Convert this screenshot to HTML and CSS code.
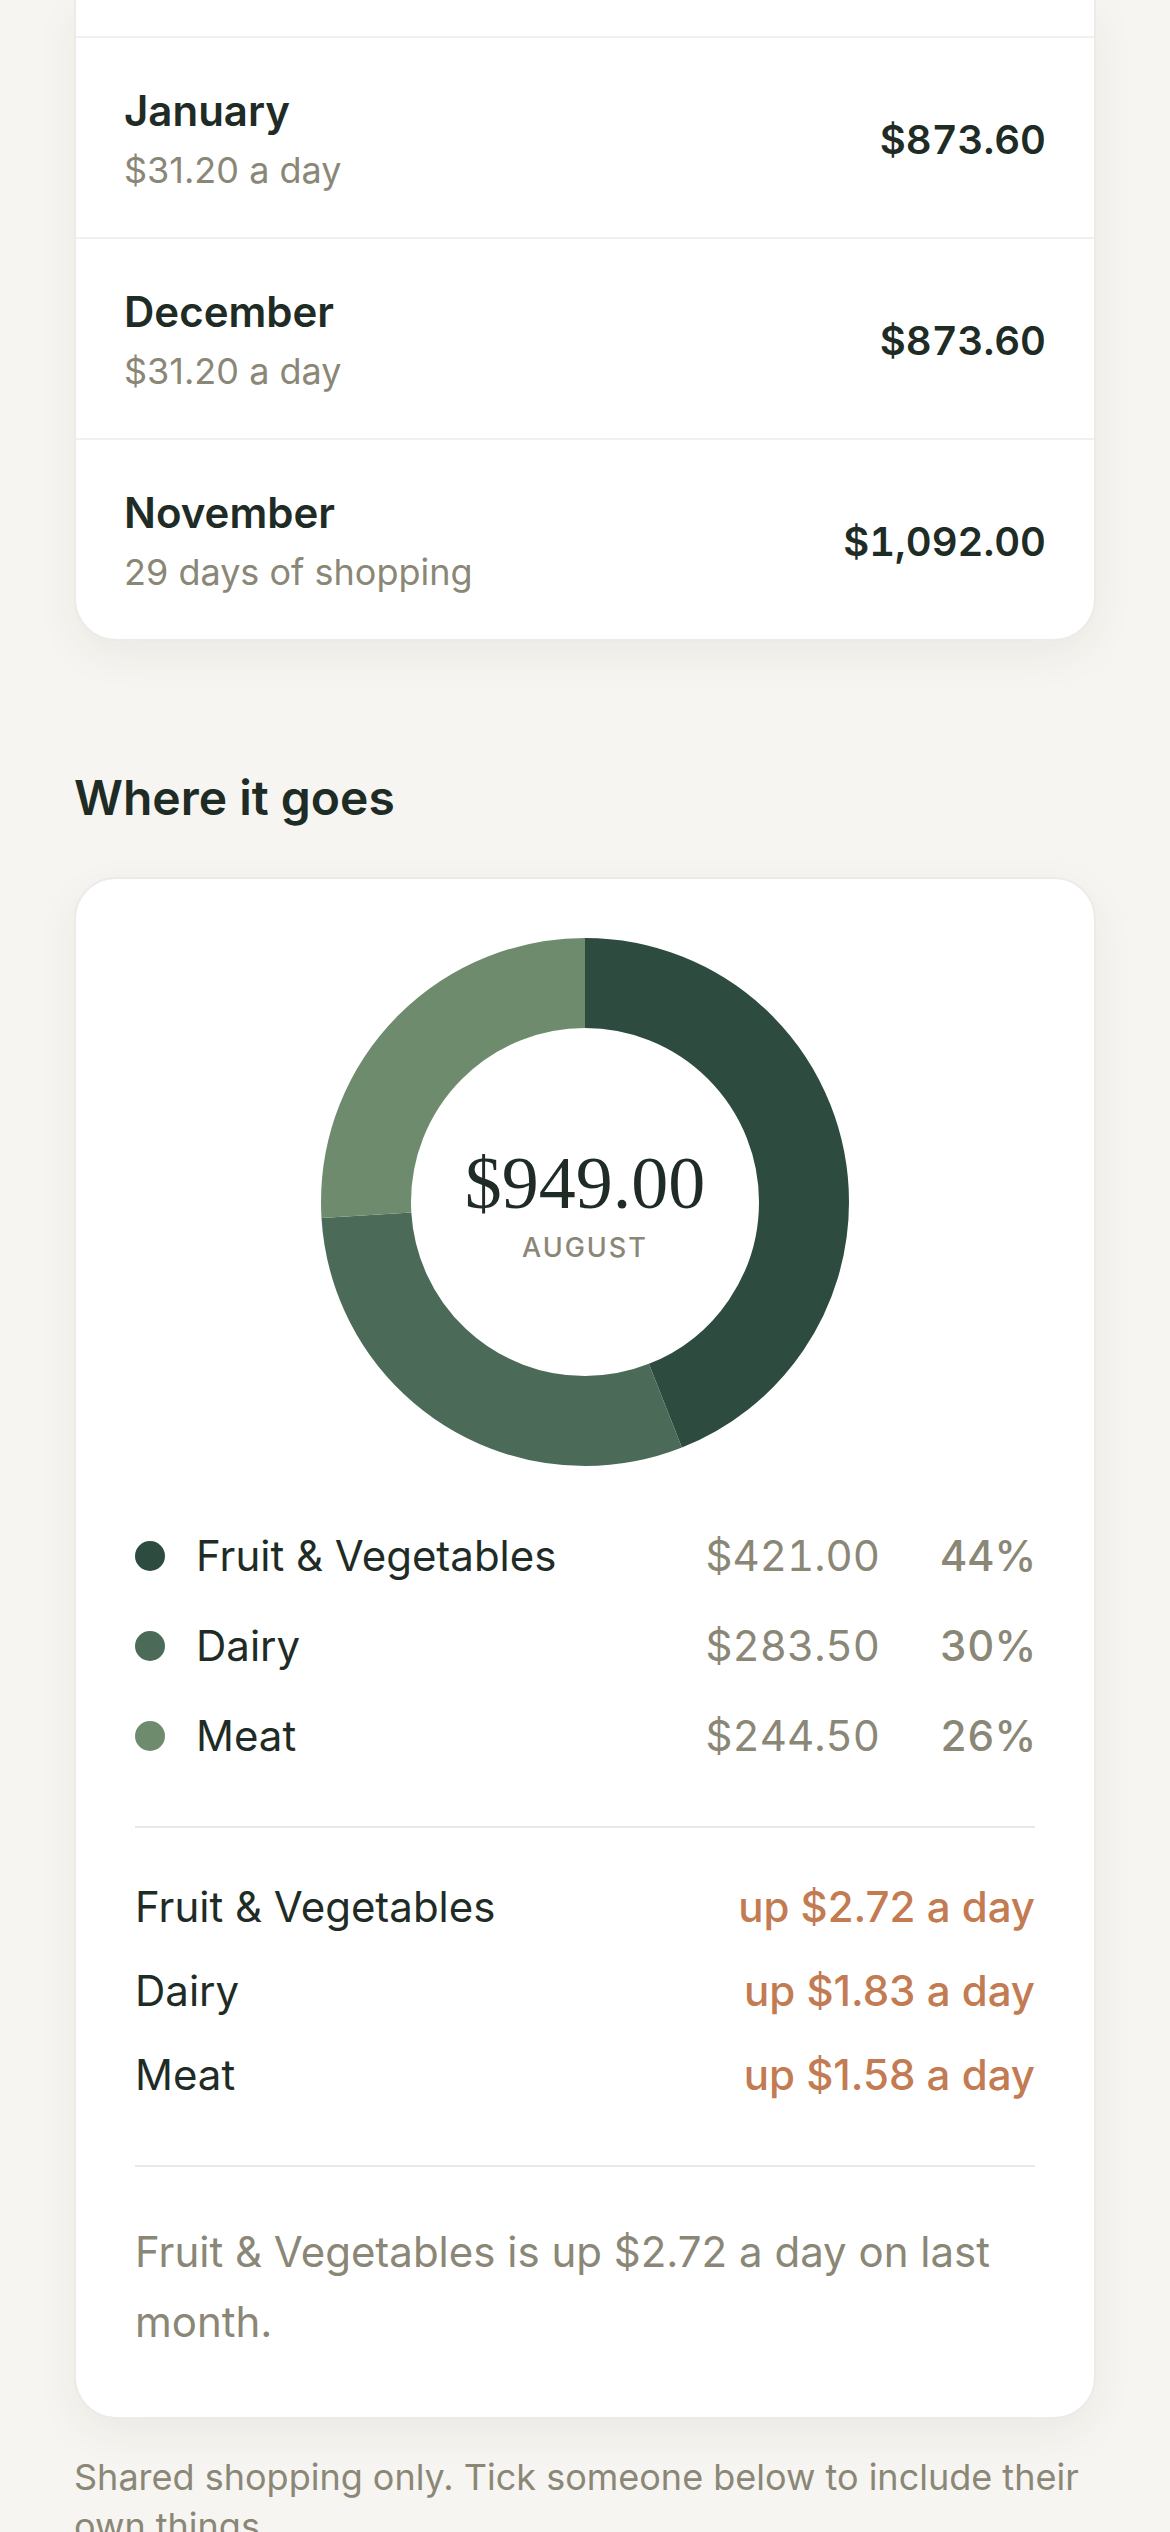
FILE: index.html
```html
<!DOCTYPE html>
<html lang="en">
<head>
<meta charset="utf-8">
<title>Spending</title>
<link rel="stylesheet" href="styles.css">
</head>
<body>
<main class="page">
  <section class="card months">
    <div class="months-top"></div>
    <div class="month-row">
      <div class="month-info">
        <div class="month-name">January</div>
        <div class="month-sub">$31.20 a day</div>
      </div>
      <div class="month-amt">$873.60</div>
    </div>
    <div class="month-row">
      <div class="month-info">
        <div class="month-name">December</div>
        <div class="month-sub">$31.20 a day</div>
      </div>
      <div class="month-amt">$873.60</div>
    </div>
    <div class="month-row">
      <div class="month-info">
        <div class="month-name">November</div>
        <div class="month-sub">29 days of shopping</div>
      </div>
      <div class="month-amt">$1,092.00</div>
    </div>
  </section>

  <h2 class="section-title">Where it goes</h2>

  <section class="card breakdown">
    <div class="donut">
      <svg class="donut-svg" width="528" height="528" viewBox="0 0 528 528" aria-hidden="true">
        <g transform="rotate(-90 264 264)">
          <circle cx="264" cy="264" r="219" fill="none" stroke="#2e4b3f" stroke-width="90" stroke-dasharray="605.44 770.56" stroke-dashoffset="0"></circle>
          <circle cx="264" cy="264" r="219" fill="none" stroke="#4b6b58" stroke-width="90" stroke-dasharray="412.80 963.20" stroke-dashoffset="-605.44"></circle>
          <circle cx="264" cy="264" r="219" fill="none" stroke="#6e8c6d" stroke-width="90" stroke-dasharray="357.76 1018.24" stroke-dashoffset="-1018.24"></circle>
        </g>
      </svg>
      <div class="donut-center">
        <div class="donut-amt">$949.00</div>
        <div class="donut-month">AUGUST</div>
      </div>
    </div>

    <ul class="legend">
      <li class="legend-row">
        <span class="dot dot-1"></span>
        <span class="legend-name">Fruit &amp; Vegetables</span>
        <span class="legend-amt">$421.00</span>
        <span class="legend-pct">44%</span>
      </li>
      <li class="legend-row">
        <span class="dot dot-2"></span>
        <span class="legend-name">Dairy</span>
        <span class="legend-amt">$283.50</span>
        <span class="legend-pct">30%</span>
      </li>
      <li class="legend-row">
        <span class="dot dot-3"></span>
        <span class="legend-name">Meat</span>
        <span class="legend-amt">$244.50</span>
        <span class="legend-pct">26%</span>
      </li>
    </ul>

    <hr class="divider divider-1">

    <ul class="changes">
      <li class="change-row">
        <span class="change-name">Fruit &amp; Vegetables</span>
        <span class="change-val">up $2.72 a day</span>
      </li>
      <li class="change-row">
        <span class="change-name">Dairy</span>
        <span class="change-val">up $1.83 a day</span>
      </li>
      <li class="change-row">
        <span class="change-name">Meat</span>
        <span class="change-val">up $1.58 a day</span>
      </li>
    </ul>

    <hr class="divider divider-2">

    <p class="note">Fruit &amp; Vegetables is up $2.72 a day on last month.</p>
  </section>

  <p class="footnote">Shared shopping only. Tick someone below to include their own things.</p>
</main>
</body>
</html>
```

FILE: styles.css
```css
* {
  box-sizing: border-box;
}

html, body {
  margin: 0;
  padding: 0;
  background: #f6f5f1;
}

body {
  font-family: Inter, "Noto Sans", "Liberation Sans", sans-serif;
  color: #1f2c26;
  overflow: hidden;
}

.page {
  padding: 0 74px;
}

.card {
  background: #ffffff;
  border: 2px solid #ecebe6;
  border-radius: 42px;
  box-shadow: 0 14px 44px rgba(60, 55, 40, 0.06);
}

/* Months card */
.months {
  border-top: none;
  border-top-left-radius: 0;
  border-top-right-radius: 0;
  overflow: hidden;
}

.months-top {
  height: 36px;
}

.month-row {
  display: flex;
  align-items: center;
  justify-content: space-between;
  height: 201px;
  padding: 4px 48px 0;
  border-top: 2px solid #f1f0ec;
}

.month-name {
  font-size: 42px;
  line-height: 56px;
  font-weight: 600;
  color: #1f2c26;
}

.month-sub {
  font-size: 36px;
  line-height: 52px;
  margin-top: 5px;
  color: #8b8777;
}

.month-amt {
  font-size: 40px;
  font-weight: 600;
  color: #1f2c26;
  font-variant-numeric: tabular-nums;
}

/* Section title */
.section-title {
  margin: 128px 0 50px;
  font-size: 48px;
  line-height: 58px;
  font-weight: 600;
  color: #1f2c26;
}

/* Breakdown card */
.breakdown {
  padding: 59px 59px 60px;
}

.donut {
  display: grid;
  place-items: center;
  width: 528px;
  height: 528px;
  margin: 0 auto;
}

.donut-svg,
.donut-center {
  grid-area: 1 / 1;
}

.donut-svg {
  display: block;
}

.donut-center {
  display: flex;
  flex-direction: column;
  align-items: center;
  padding-top: 8px;
}

.donut-amt {
  font-family: "Liberation Serif", "DejaVu Serif", serif;
  font-size: 74px;
  line-height: 70px;
  color: #1f2c26;
}

.donut-month {
  margin-top: 14px;
  font-size: 27px;
  line-height: 32px;
  font-weight: 500;
  letter-spacing: 2px;
  color: #8b8777;
}

.legend,
.changes {
  list-style: none;
  margin: 0;
  padding: 0;
  display: flex;
  flex-direction: column;
}

.legend {
  margin-top: 60px;
  gap: 30px;
}

.legend-row {
  display: flex;
  align-items: center;
  font-size: 42px;
  line-height: 60px;
}

.dot {
  width: 30px;
  height: 30px;
  border-radius: 50%;
  margin-right: 31px;
  flex: none;
}

.dot-1 { background: #2e4b3f; }
.dot-2 { background: #4b6b58; }
.dot-3 { background: #6e8c6d; }

.legend-name {
  flex: 1;
  color: #1f2c26;
}

.legend-amt {
  color: #8b8777;
  text-align: right;
  font-variant-numeric: tabular-nums;
}

.legend-pct {
  width: 95px;
  margin-left: 60px;
  text-align: right;
  font-weight: 500;
  color: #8b8777;
  font-variant-numeric: tabular-nums;
}

.divider {
  border: none;
  height: 2px;
  background: #ebe9e5;
  margin: 0;
}

.divider-1 {
  margin-top: 60px;
}

.changes {
  margin-top: 49px;
  gap: 24px;
}

.change-row {
  display: flex;
  justify-content: space-between;
  align-items: center;
  font-size: 42px;
  line-height: 60px;
}

.change-name {
  color: #1f2c26;
}

.change-val {
  color: #c27b52;
  font-weight: 500;
}

.divider-2 {
  margin-top: 60px;
}

.note {
  margin: 50px 0 0;
  font-size: 42px;
  line-height: 70px;
  color: #8b8777;
}

.footnote {
  margin: 34px 0 0;
  font-size: 36px;
  line-height: 49px;
  color: #8b8777;
}
```
